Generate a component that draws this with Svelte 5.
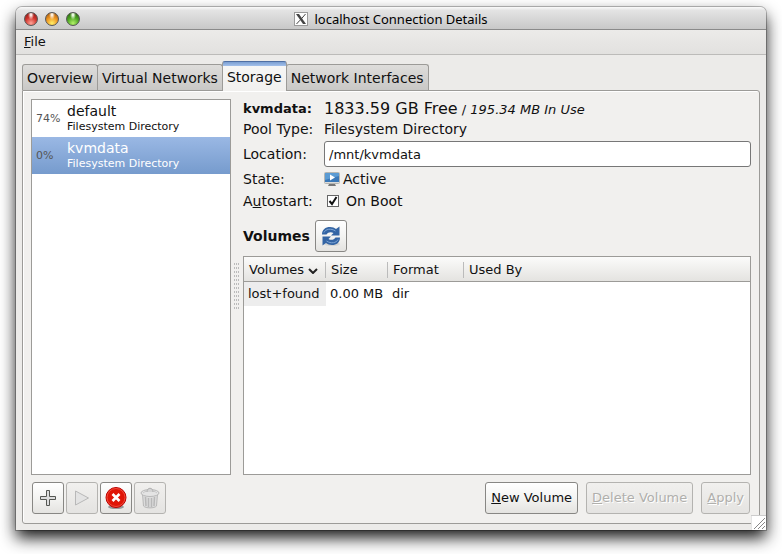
<script>
    const tabs = ["Overview", "Virtual Networks", "Storage", "Network Interfaces"];
    const pools = [
        { name: "default", type: "Filesystem Directory", used: "74%" },
        { name: "kvmdata", type: "Filesystem Directory", used: "0%" },
    ];
    const volumes = [{ name: "lost+found", size: "0.00 MB", format: "dir", usedBy: "" }];

    let tab = "Storage";
    let pool = "kvmdata";
    let location = "/mnt/kvmdata";
    let autostart = true;
</script>

<div class="desktop">
    <main class="window">
        <header class="titlebar">
            <div class="lights">
                <button class="light red" aria-label="Close"></button>
                <button class="light amber" aria-label="Minimize"></button>
                <button class="light green" aria-label="Zoom"></button>
            </div>
            <h1>
                <svg width="14" height="14" viewBox="0 0 14 14" aria-hidden="true">
                    <rect x=".5" y=".5" width="13" height="13" fill="#fdfdfd" stroke="#9a9a9a" />
                    <path d="M2 2h3l7 10H9z" fill="#444" />
                    <path d="M11.500 2L7.600 6.600M6 8.200L2.500 12" stroke="#444" />
                </svg>
                localhost Connection Details
            </h1>
        </header>

        <nav class="menubar">
            <button><u>F</u>ile</button>
        </nav>

        <div class="content">
            <div class="tabs" role="tablist">
                {#each tabs as name}
                    <button role="tab" class:active={tab === name} aria-selected={tab === name} on:click={() => (tab = name)}>{name}</button>
                {/each}
            </div>

            <section class="panel">
                <div class="split">
                    <div class="pools" role="listbox" aria-label="Storage pools">
                        {#each pools as p}
                            <button role="option" class="pool" class:selected={pool === p.name} aria-selected={pool === p.name} on:click={() => (pool = p.name)}>
                                <span class="used">{p.used}</span>
                                <span class="name">{p.name}</span>
                                <span class="type">{p.type}</span>
                            </button>
                        {/each}
                    </div>

                    <div class="handle"></div>

                    <div class="details">
                        <div class="row">
                            <strong>kvmdata:</strong>
                            <div class="space"><span>1833.59 GB Free</span> / <em>195.34 MB In Use</em></div>
                        </div>
                        <div class="row">
                            <span>Pool Type:</span>
                            <span>Filesystem Directory</span>
                        </div>
                        <div class="row tall">
                            <label for="location">Location:</label>
                            <input id="location" type="text" bind:value={location}>
                        </div>
                        <div class="row">
                            <span>State:</span>
                            <span class="state">
                                <svg width="16" height="14" viewBox="0 0 16 14" aria-hidden="true">
                                    <rect x=".5" y=".5" width="15" height="11" rx="1" fill="#dcdcda" stroke="#b5b5b2" />
                                    <rect x="1" y="1" width="14" height="9" fill="#3a78b8" />
                                    <path d="M1 1h14v3L1 8z" fill="#5b9bd3" />
                                    <path d="M6 2.500v6l5-3z" fill="#fff" />
                                    <path d="M5 12h6l1 2H4z" fill="#777" />
                                </svg>
                                Active
                            </span>
                        </div>
                        <div class="row boot">
                            <span>A<u>u</u>tostart:</span>
                            <label class="check"><input type="checkbox" bind:checked={autostart}>On Boot</label>
                        </div>

                        <div class="volumes-head">
                            <h2>Volumes</h2>
                            <button class="btn icon" aria-label="Refresh volumes">
                                <svg width="20" height="20" viewBox="0 0 20 20" aria-hidden="true">
                                    <ellipse cx="11" cy="18" rx="8" ry="2" fill="#d6d6d4" />
                                    <path d="M1 8.500C1 3.500 4.500 1 9 1c2.500 0 4.500.8 6 2l3.500-2.500v9H10L12.500 7c-2.500-1.500-5.500-1-7 1.500z" fill="#3465a4" />
                                    <path d="M19 11.500C19 16.500 15.500 19 11 19c-2.500 0-4.500-.8-6-2l-3.500 2.500v-9H10L7.500 13c2.500 1.500 5.500 1 7-1.500z" fill="#3465a4" />
                                    <path d="M3 6.500C4.500 3 10 2 14.500 5M17 13.500C15.500 17 10 18 5.500 15" fill="none" stroke="#7ea6d6" />
                                </svg>
                            </button>
                        </div>

                        <div class="volumes">
                            <table>
                                <thead>
                                    <tr>
                                        <th class="c-name">Volumes
                                            <svg width="10" height="6" viewBox="0 0 10 6" aria-hidden="true"><path d="M1 1l4 4 4-4" fill="none" stroke="#222" stroke-width="2" /></svg>
                                        </th>
                                        <th class="c-size">Size</th>
                                        <th class="c-format">Format</th>
                                        <th>Used By</th>
                                    </tr>
                                </thead>
                                <tbody>
                                    {#each volumes as v}
                                        <tr>
                                            <td>{v.name}</td>
                                            <td>{v.size}</td>
                                            <td>{v.format}</td>
                                            <td>{v.usedBy}</td>
                                        </tr>
                                    {/each}
                                </tbody>
                            </table>
                        </div>
                    </div>
                </div>

                <footer>
                    <div class="group tools">
                        <button class="btn icon" aria-label="Add pool">
                            <svg width="18" height="18" viewBox="0 0 18 18" aria-hidden="true">
                                <path d="M7.500 1.500h3v6h6v3h-6v6h-3v-6h-6v-3h6z" fill="#ddd" stroke="#555753" />
                            </svg>
                        </button>
                        <button class="btn icon" disabled aria-label="Start pool">
                            <svg width="18" height="18" viewBox="0 0 18 18" aria-hidden="true">
                                <path d="M2.500 2v14l13-7z" fill="#e3e3e3" stroke="#b8b8b8" />
                            </svg>
                        </button>
                        <button class="btn icon" aria-label="Stop pool">
                            <svg width="22" height="22" viewBox="0 0 22 22" aria-hidden="true">
                                <ellipse cx="11" cy="20" rx="8" ry="2" fill="#999" />
                                <circle cx="11" cy="10.500" r="10" fill="#e01507" stroke="#b00" />
                                <circle cx="11" cy="10.500" r="9" fill="none" stroke="#f04a3a" />
                                <path d="M7.500 7l7 7M14.500 7l-7 7" stroke="#fff" stroke-width="2.600" />
                            </svg>
                        </button>
                        <button class="btn icon" disabled aria-label="Delete pool">
                            <svg width="20" height="22" viewBox="0 0 20 22" aria-hidden="true">
                                <path d="M2.500 7l1 12c2 2.500 11 2.500 13 0l1-12z" fill="#dcdcdc" stroke="#b8b8b8" />
                                <path d="M5.500 10l.5 9M8.500 11v9M11.500 11v9M14.500 10l-.5 9" stroke="#b8b8b8" stroke-width="1.500" />
                                <ellipse cx="10" cy="6" rx="9" ry="3.500" fill="#e4e4e4" stroke="#b8b8b8" />
                                <path d="M3 6c3-3 11-3 14 0" fill="none" stroke="#c8c8c8" />
                                <path d="M7 5c0-5 6-5 6 0" fill="#d4d4d4" stroke="#b0b0b0" />
                            </svg>
                        </button>
                    </div>
                    <div class="group">
                        <button class="btn"><u>N</u>ew Volume</button>
                        <button class="btn" disabled><u>D</u>elete Volume</button>
                        <button class="btn" disabled><u>A</u>pply</button>
                    </div>
                </footer>
            </section>
        </div>

        <svg class="grip" width="15" height="15" viewBox="0 0 15 15" aria-hidden="true">
            <rect width="15" height="15" fill="#fff" />
            <path d="M0 15V.5h15" fill="none" stroke="#ccc" />
            <path d="M3 14L14 3M7 14l7-7M11 14l3-3" stroke="#888" />
        </svg>
    </main>
</div>

<style>
    :global(body) {
        margin: 0;
        background: white;
    }

    .desktop {
        box-sizing: border-box;
        display: flex;
        min-height: 100vh;
        padding: 7px 16px 24px;
        overflow: hidden;
    }

    .window {
        position: relative;
        display: flex;
        flex: 1;
        flex-direction: column;
        min-width: 0;
        color: #111;
        background: #ecebe9;
        border-radius: 6px 6px 0 0;
        box-shadow: 0 0 0 1px rgba(0, 0, 0, 0.25), 0 8px 16px rgba(0, 0, 0, 0.9);
        font: 13px/16px "DejaVu Sans", sans-serif;
    }

    button,
    input {
        color: inherit;
        font: inherit;
    }

    .titlebar {
        position: relative;
        display: flex;
        align-items: center;
        justify-content: center;
        height: 20px;
        padding-top: 2px;
        background: linear-gradient(#fafafa, #e4e4e4 15%, #c8c8c8);
        border-bottom: 1px solid #8a8a8a;
        border-radius: 6px 6px 0 0;
    }

    .lights {
        position: absolute;
        left: 8px;
        display: flex;
        gap: 7px;
    }

    .light {
        width: 14px;
        height: 14px;
        padding: 0;
        border: 1px solid #555;
        border-radius: 50%;
    }

    .red {
        background: radial-gradient(ellipse at 50% 15%, #fbe4e0 8%, transparent 35%), radial-gradient(circle at 50% 85%, #ffa498, #d0342c 50%, #7c1512);
    }

    .amber {
        background: radial-gradient(ellipse at 50% 15%, #fdeedb 8%, transparent 35%), radial-gradient(circle at 50% 85%, #fff06a, #ee9420 50%, #8d4a0c);
    }

    .green {
        background: radial-gradient(ellipse at 50% 15%, #e8f8dc 8%, transparent 35%), radial-gradient(circle at 50% 85%, #b4f26a, #4ca522 50%, #22560c);
    }

    h1 {
        display: flex;
        align-items: center;
        gap: 6px;
        margin: 0;
        color: #000;
        font: 13px/16px "Noto Sans", sans-serif;
    }

    .menubar {
        display: flex;
        align-items: center;
        height: 24px;
        padding: 0 8px;
        background: linear-gradient(#ecebe9, #e2e1df);
        border-bottom: 1px solid #bcbbb9;
    }

    .menubar button {
        padding: 0;
        background: none;
        border: 0;
    }

    .content {
        display: flex;
        flex: 1;
        flex-direction: column;
        padding: 6px;
    }

    .tabs {
        display: flex;
        align-items: flex-end;
        font-size: 14px;
    }

    .tabs button {
        height: 26px;
        margin-right: -1px;
        padding: 1px 4px 0;
        background: linear-gradient(#dedddb, #c9c8c6);
        border: 1px solid #9c9b98;
        border-bottom: 0;
        border-radius: 3px 3px 0 0;
    }

    .tabs .active {
        position: relative;
        height: 30px;
        margin-bottom: -1px;
        background: linear-gradient(#7b9fd2, #a3c0ea 4px, #f6f6f5 4px, #f1f0ee);
        border-top-color: #4f6fa3;
    }

    .panel {
        display: flex;
        flex: 1;
        flex-direction: column;
        gap: 7px;
        padding: 8px 8px 9px;
        background: #f1f0ee;
        border: 1px solid #9c9b98;
        border-radius: 0 3px 3px 3px;
        box-shadow: inset 1px 1px white;
    }

    .split {
        display: grid;
        flex: 1;
        grid-template-columns: 200px 12px 1fr;
    }

    .pools,
    .volumes {
        background: white;
        border: 1px solid #9c9b98;
    }

    .pool {
        display: grid;
        grid-template-columns: 31px 1fr;
        align-items: center;
        width: 100%;
        height: 37px;
        padding: 3px 4px;
        background: none;
        border: 0;
        text-align: left;
    }

    .used {
        grid-row: span 2;
        color: #555;
        font-size: 11px;
    }

    .name {
        font-size: 14px;
    }

    .type {
        font-size: 11px;
    }

    .selected {
        color: white;
        background: linear-gradient(#9ab8e4, #769bcd);
    }

    .handle {
        align-self: center;
        justify-self: center;
        width: 6px;
        height: 48px;
        background: conic-gradient(transparent 75%, #bbb 0) 0 0 / 2px 4px;
    }

    .details {
        display: flex;
        flex-direction: column;
        min-width: 0;
    }

    .row {
        display: grid;
        grid-template-columns: 81px 1fr;
        align-items: center;
        min-height: 20px;
        font-size: 14px;
    }

    .row strong,
    .space {
        font-size: 13px;
    }

    .space span {
        font-size: 16px;
    }

    .tall {
        min-height: 30px;
    }

    .boot {
        min-height: 24px;
    }

    #location {
        box-sizing: border-box;
        width: 100%;
        height: 26px;
        padding: 0 4px;
        background: white;
        border: 1px solid #777;
        border-radius: 3px;
        font-size: 13px;
    }

    .state {
        display: flex;
        align-items: center;
        gap: 3px;
    }

    .check {
        display: flex;
        align-items: center;
        gap: 7px;
        padding-left: 3px;
    }

    .check input {
        width: 12px;
        height: 12px;
        margin: 0;
        appearance: none;
        background: white;
        border: 1px solid #666;
    }

    .check input:checked {
        background: white url("data:image/svg+xml,%3Csvg xmlns='http://www.w3.org/2000/svg' viewBox='0 0 10 10'%3E%3Cpath d='M1.500 5l2.500 3 4.500-7' fill='none' stroke='%23111' stroke-width='2'/%3E%3C/svg%3E");
    }

    .volumes-head {
        display: flex;
        align-items: center;
        gap: 5px;
        margin: 7px 0 4px;
    }

    h2 {
        margin: 0;
        font-size: 14px;
    }

    .volumes {
        flex: 1;
    }

    table {
        width: 100%;
        border-collapse: collapse;
        table-layout: fixed;
    }

    th,
    td {
        height: 24px;
        padding: 1px 5px 0;
        font-weight: normal;
        text-align: left;
        white-space: nowrap;
    }

    thead {
        background: linear-gradient(#fbfbfa, #e3e2df);
        box-shadow: inset 0 -1px #9c9b98;
    }

    th:not(:last-child) {
        background: linear-gradient(#bbb, #bbb) 100% 50% / 1px 16px no-repeat;
    }

    td {
        padding: 0 4px;
    }

    td:first-child {
        background: #ededed;
    }

    .c-name {
        width: 72px;
    }

    .c-size {
        width: 52px;
    }

    .c-format {
        width: 66px;
    }

    footer,
    .group {
        display: flex;
        justify-content: space-between;
        gap: 8px;
    }

    footer {
        padding: 0 1px;
    }

    .tools {
        gap: 2px;
    }

    .btn {
        box-sizing: border-box;
        height: 32px;
        padding: 0 5px;
        background: linear-gradient(#fff, #f4f4f2 50%, #e4e3e0);
        border: 1px solid #888784;
        border-radius: 3px;
    }

    .btn:disabled {
        color: #b0afac;
        background: linear-gradient(#f1f0ee, #e4e3e1);
        border-color: #b4b3b0;
        text-shadow: 1px 1px white;
    }

    .icon {
        display: flex;
        align-items: center;
        justify-content: center;
        width: 32px;
        padding: 0;
    }

    .grip {
        position: absolute;
        right: 0;
        bottom: 0;
    }
</style>
